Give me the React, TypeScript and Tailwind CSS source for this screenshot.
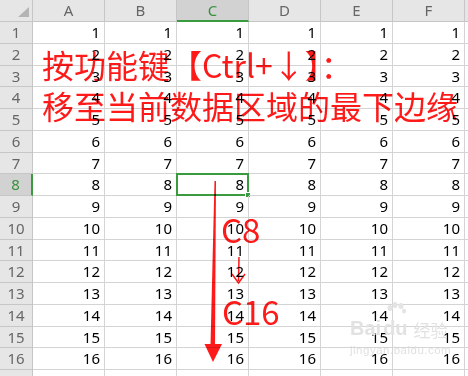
import React from 'react';

const cols = ['A', 'B', 'C', 'D', 'E', 'F'];
const rows = Array.from({ length: 17 }, (_, i) => i + 1);

const App: React.FC = () => {
  return (
    <div className="relative w-[468px] h-[376px] overflow-hidden bg-white" style={{ fontFamily: '"Noto Sans", "Noto Sans CJK SC", sans-serif' }}>
      {/* Header row */}
      <div className="flex h-[22px]">
        <div className="relative w-[33px] shrink-0 bg-[#e6e6e6] border-r border-b border-[#c6c6c6]">
          <div className="absolute left-[18px] top-[7px] w-0 h-0 border-l-[11px] border-l-transparent border-b-[10px] border-b-[#b4b4b4]" />
        </div>
        {cols.map((c) => (
          <div
            key={c}
            className={
              c === 'C'
                ? 'w-[72px] shrink-0 flex items-center justify-center bg-[#d2d2d2] border-r border-[#c6c6c6] border-b-2 border-b-[#3a9a3e] text-[#3a8f3e] text-[15px]'
                : 'w-[72px] shrink-0 flex items-center justify-center bg-[#e6e6e6] border-r border-b border-[#c6c6c6] text-[#666] text-[15px]'
            }
          >
            {c}
          </div>
        ))}
        <div className="flex-1 bg-[#e6e6e6] border-b border-[#c6c6c6]" />
      </div>

      {/* Body rows */}
      {rows.map((r) => (
        <div key={r} className="flex h-[21.75px]">
          <div
            className={
              r === 8
                ? 'w-[33px] shrink-0 flex items-center justify-center bg-[#d2d2d2] border-r-2 border-r-[#3a9a3e] border-b border-[#c6c6c6] text-[#3a8f3e] text-[15px]'
                : 'w-[33px] shrink-0 flex items-center justify-center bg-[#e6e6e6] border-r border-b border-[#c6c6c6] text-[#666] text-[15px]'
            }
          >
            {r <= 16 ? r : ''}
          </div>
          {cols.map((c) => (
            <div
              key={c}
              className="relative w-[72px] shrink-0 flex items-center justify-end pr-[4px] border-r border-b border-[#d4d4d4] text-[15px] text-black"
            >
              {r <= 16 ? r : ''}
              {c === 'C' && r === 8 && (
                <div className="absolute -left-[1px] -top-[1px] -right-[1px] -bottom-[1px] border-2 border-[#3a9a3e]">
                  <div className="absolute -right-[4px] -bottom-[4px] w-[6px] h-[6px] bg-[#3a9a3e] border border-white" />
                </div>
              )}
            </div>
          ))}
          <div className="flex-1 border-b border-[#d4d4d4]" />
        </div>
      ))}

      {/* Annotation text */}
      <div
        className="absolute left-[42px] top-[44px] text-[32px] leading-[41px] text-[#ff1a1a] whitespace-nowrap mix-blend-multiply"
        style={{ fontFamily: '"Noto Sans CJK SC", sans-serif' }}
      >
        <div>按功能键【Ctrl+↓】：</div>
        <div>移至当前数据区域的最下边缘</div>
      </div>

      <div
        className="absolute left-[221px] top-[209px] text-[33px] leading-[40px] text-[#ff1a1a] mix-blend-multiply"
        style={{ fontFamily: '"Noto Sans CJK SC", sans-serif' }}
      >
        C8
      </div>
      <div
        className="absolute left-[222px] top-[291px] text-[33px] leading-[40px] text-[#ff1a1a] mix-blend-multiply"
        style={{ fontFamily: '"Noto Sans CJK SC", sans-serif' }}
      >
        C16
      </div>

      {/* Arrows */}
      <svg className="absolute left-0 top-0 mix-blend-multiply" width="468" height="376" viewBox="0 0 468 376">
        <polygon points="214.5,181 216,181 215,345 210.5,345" fill="#ff1a1a" />
        <polygon points="204.5,344 222,344 213,362" fill="#ff1a1a" />
        <line x1="239" y1="257" x2="238.5" y2="281" stroke="#ff1a1a" strokeWidth="1.5" />
        <polyline points="232,274 238.5,283 245,274" fill="none" stroke="#ff1a1a" strokeWidth="1.5" />
      </svg>

      {/* Watermark */}
      <div className="absolute left-[350px] top-[318px] text-[#e2e2e2] select-none">
        <div className="flex items-end gap-[2px] leading-none">
          <span className="text-[20px] font-bold" style={{ fontFamily: '"Liberation Sans", sans-serif' }}>Bai</span>
          <span className="relative text-[20px] font-bold" style={{ fontFamily: '"Liberation Sans", sans-serif' }}>
            du
            <svg className="absolute -top-[16px] left-[2px]" width="22" height="18" viewBox="0 0 22 18">
              <ellipse cx="5" cy="6" rx="2.5" ry="3" fill="#e4e4e4" />
              <ellipse cx="10" cy="3" rx="2.5" ry="3" fill="#e4e4e4" />
              <ellipse cx="16" cy="4" rx="2.5" ry="3" fill="#e4e4e4" />
              <ellipse cx="19" cy="9" rx="2" ry="2.5" fill="#e4e4e4" />
            </svg>
          </span>
          <span className="text-[17px] ml-[4px]" style={{ fontFamily: '"Noto Sans CJK SC", sans-serif' }}>经验</span>
        </div>
        <div className="text-[11.5px] mt-[4px] tracking-[0.5px]" style={{ fontFamily: '"Liberation Sans", sans-serif' }}>
          jingyan.baidu.com
        </div>
      </div>
    </div>
  );
};

export default App;
